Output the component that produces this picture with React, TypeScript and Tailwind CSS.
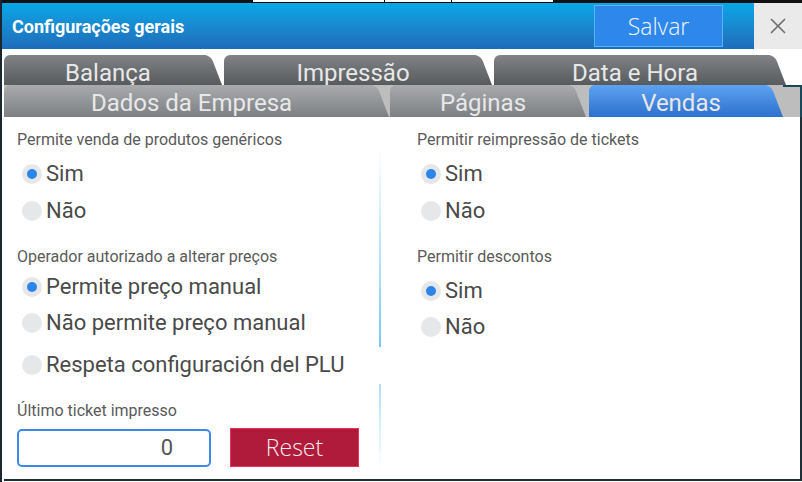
import React from 'react';
import { X } from 'lucide-react';

interface TabProps {
  label: string;
  width: number;
  row: 1 | 2;
  active?: boolean;
}

function Tab({ label, width, row, active }: TabProps) {
  const bg = active
    ? 'bg-gradient-to-b from-[#5ea3f1] to-[#2b70cd]'
    : row === 1
      ? 'bg-gradient-to-b from-[#818385] to-[#575b5e]'
      : 'bg-gradient-to-b from-[#a9abad] to-[#7d8083]';
  return (
    <div className="relative h-full shrink-0 overflow-hidden" style={{ width }}>
      <div className={`absolute inset-y-0 left-0 right-[16px] rounded-tl-[6px] ${bg}`} />
      <div className={`absolute inset-y-0 right-0 w-[26px] origin-bottom skew-x-[21deg] rounded-tr-[6px] ${bg}`} />
      <div className="relative pr-[10px] pt-[4px] text-center text-[24px] leading-[28px] text-[#e8e8e8]">
        {label}
      </div>
    </div>
  );
}

function Radio({ label, checked, className = 'h-[37px]' }: { label: string; checked?: boolean; className?: string }) {
  return (
    <div className={`flex items-center gap-[4px] ${className}`}>
      <span className="flex h-[20px] w-[20px] items-center justify-center rounded-full bg-[#e5e7e9]">
        {checked && <span className="h-[10px] w-[10px] rounded-full bg-[#2b85ec]" />}
      </span>
      <span className="text-[22px] leading-none text-[#4a4a4a]">{label}</span>
    </div>
  );
}

function Label({ children }: { children: React.ReactNode }) {
  return <div className="flex h-[24px] items-center text-[16px] text-[#5a5a5a]">{children}</div>;
}

export default function App() {
  return (
    <div
      className="flex h-[482px] w-[802px] flex-col overflow-hidden border-l-2 border-[#1b2630] bg-white"
      style={{ fontFamily: 'Roboto, "Noto Sans", sans-serif' }}
    >
      {/* top strip */}
      <div className="flex h-[3px] bg-[#111]">
        <div className="w-[250px]" />
        <div className="flex w-[302px] border-x border-b border-black bg-white">
          <div className="w-[132px] border-r border-black" />
          <div className="w-[67px] border-r border-black" />
        </div>
      </div>

      {/* header */}
      <div className="flex h-[46px]">
        <div className="flex flex-1 items-center justify-between bg-gradient-to-b from-[#07a7e7] to-[#1e6cb9] pl-[10px] pr-[31px]">
          <span className="text-[18px] font-bold text-white">Configurações gerais</span>
          <button className="h-[42px] w-[129px] border border-[#58b4f4] bg-[#2e88ec] font-['Open_Sans',sans-serif] text-[23px] font-light text-[#f2f6fc]">
            Salvar
          </button>
        </div>
        <div className="flex w-[48px] items-center justify-center bg-[#e9eae9] text-[#707070]">
          <X size={26} strokeWidth={1.6} />
        </div>
      </div>

      {/* tabs */}
      <div className="mt-[6px] pl-[2px]">
        <div className="flex h-[30px] gap-[2px]">
          <Tab label="Balança" width={218} row={1} />
          <Tab label="Impressão" width={268} row={1} />
          <Tab label="Data e Hora" width={292} row={1} />
        </div>
        <div className="flex h-[32px] bg-[#bdbdbd]">
          <Tab label="Dados da Empresa" width={385} row={2} />
          <div className="w-[1px]" />
          <Tab label="Páginas" width={196} row={2} />
          <div className="w-[3px]" />
          <Tab label="Vendas" width={194} row={2} active />
          <div className="flex-1 border-t-2 border-r-2 border-[#18485a]" />
        </div>
      </div>

      {/* panel */}
      <div className="ml-[2px] flex h-[364px] border-r-2 border-b-2 border-[#1f2f38]">
        <div className="w-[375px] pl-[13px] pt-[11px]">
          <Label>Permite venda de produtos genéricos</Label>
          <div className="mt-[3px] pl-[5px]">
            <Radio label="Sim" checked />
            <Radio label="Não" />
          </div>
          <div className="mt-[16px]">
            <Label>Operador autorizado a alterar preços</Label>
          </div>
          <div className="pl-[5px]">
            <Radio label="Permite preço manual" checked className="h-[36px]" />
            <Radio label="Não permite preço manual" className="h-[36px]" />
            <Radio label="Respeta configuración del PLU" className="mt-[6px] h-[36px]" />
          </div>
          <div className="mt-[16px]">
            <Label>Último ticket impresso</Label>
          </div>
          <div className="mt-[5px] flex items-center gap-[19px]">
            <div className="flex h-[38px] w-[194px] items-center justify-end rounded-[5px] border-2 border-[#3d8be6] pr-[36px] text-[22px] text-[#555]">
              0
            </div>
            <button className="h-[39px] w-[129px] border border-[#e8335a] bg-[#b01a3b] font-['Open_Sans',sans-serif] text-[23px] font-light text-[#f6eef0]">
              Reset
            </button>
          </div>
        </div>

        <div className="flex w-[2px] flex-col pt-[31px]">
          <div className="h-[199px] bg-gradient-to-b from-white to-[#6fcbf4]" />
          <div className="h-[37px]" />
          <div className="h-[86px] bg-gradient-to-b from-[#a8e0f8] to-white" />
        </div>

        <div className="flex-1 pl-[36px] pt-[11px]">
          <Label>Permitir reimpressão de tickets</Label>
          <div className="mt-[3px] pl-[4px]">
            <Radio label="Sim" checked />
            <Radio label="Não" />
          </div>
          <div className="mt-[16px]">
            <Label>Permitir descontos</Label>
          </div>
          <div className="mt-[4px] pl-[4px]">
            <Radio label="Sim" checked className="h-[36px]" />
            <Radio label="Não" className="h-[36px]" />
          </div>
        </div>
      </div>
    </div>
  );
}
